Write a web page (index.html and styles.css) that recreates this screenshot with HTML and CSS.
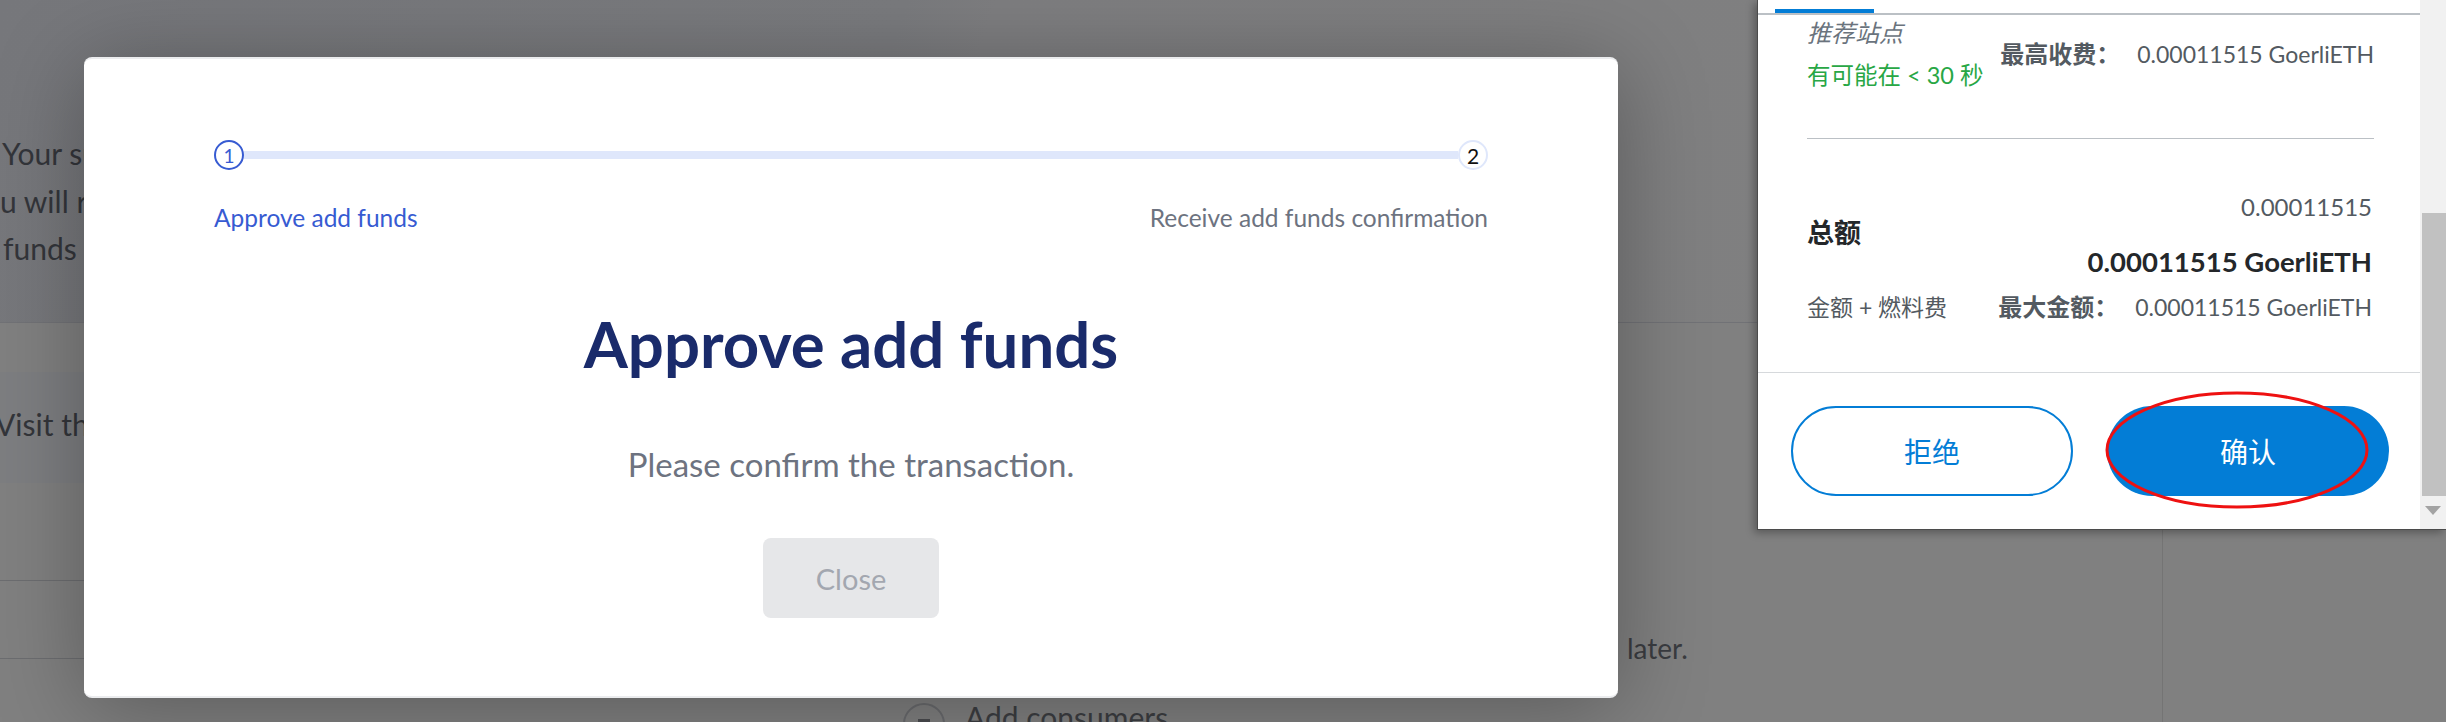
FILE: index.html
```html
<!DOCTYPE html>
<html lang="en">
<head>
<meta charset="utf-8">
<title>Approve add funds</title>
<link rel="stylesheet" href="styles.css">
</head>
<body>
<div class="bg">
  <main class="bg-main">
    <section class="bg-intro">
      <p class="l1">Your sub</p>
      <p class="l2">u will re</p>
      <p class="l3">funds an</p>
    </section>
    <section class="bg-visit">
      <p>Visit the</p>
    </section>
    <section class="bg-lower">
      <div class="bg-left">
        <div class="bg-row"></div>
        <div class="bg-row bg-row-last"></div>
        <div class="bg-add">
          <span class="add-icon"><span class="add-dash"></span></span>
          <span class="add-text">Add consumers</span>
        </div>
      </div>
      <div class="bg-right">
        <p>later.</p>
      </div>
    </section>
  </main>
  <aside class="bg-side"></aside>
</div>

<div class="modal">
  <div class="steps">
    <div class="track">
      <span class="dot dot-active">1</span>
      <span class="bar"></span>
      <span class="dot dot-next">2</span>
    </div>
    <div class="step-labels">
      <span class="lbl-active">Approve add funds</span>
      <span class="lbl-next">Receive add funds confirmation</span>
    </div>
  </div>
  <h1 class="title">Approve add funds</h1>
  <p class="subtitle">Please confirm the transaction.</p>
  <button class="close-btn" type="button">Close</button>
</div>

<div class="mm">
  <div class="mm-content">
    <div class="mm-tabs"><span class="tab-ind"></span></div>
    <div class="mm-fee">
      <div class="fee-left">
        <p class="site">推荐站点</p>
        <p class="eta">有可能在 &lt; 30 秒</p>
      </div>
      <div class="fee-right">
        <span class="key">最高收费：</span><span class="val">0.00011515 GoerliETH</span>
      </div>
    </div>
    <div class="mm-total">
      <div class="tot-head">总额</div>
      <div class="tot-vals">
        <p class="val">0.00011515</p>
        <p class="tot-big">0.00011515 GoerliETH</p>
      </div>
      <div class="tot-sub">金额 + 燃料费</div>
      <div class="tot-max">
        <span class="key">最大金额：</span><span class="val">0.00011515 GoerliETH</span>
      </div>
    </div>
    <div class="mm-actions">
      <button class="mm-btn mm-reject" type="button">拒绝</button>
      <button class="mm-btn mm-confirm" type="button">确认</button>
    </div>
  </div>
  <div class="mm-scroll">
    <span class="sb-space"></span>
    <span class="sb-thumb"></span>
    <span class="sb-down"></span>
  </div>
</div>

<svg class="mark" width="266" height="122" viewBox="0 0 266 122" aria-hidden="true">
  <ellipse cx="133" cy="60" rx="130" ry="57" fill="none" stroke="#ee1111" stroke-width="3"/>
</svg>
</body>
</html>
```

FILE: styles.css
```css
* { box-sizing: border-box; margin: 0; padding: 0; }
html, body { width: 2446px; height: 722px; overflow: hidden; }
body {
  position: relative;
  background: #808080;
  font-family: Lato, "Noto Sans CJK SC", sans-serif;
}

/* ---------- dimmed page behind ---------- */
.bg {
  display: grid;
  grid-template-columns: 2162px 1fr;
  height: 722px;
  overflow: hidden;
}
.bg-main { display: flex; flex-direction: column; }
.bg-side { border-left: 1px solid #747474; background: #808080; }

.bg-intro {
  height: 323px;
  padding-top: 130px;
  border-bottom: 1px solid #717276;
  font-size: 30px;
  line-height: 47.5px;
  color: #33353a;
  white-space: nowrap;
  background: linear-gradient(108deg, #76777b 0%, #7a7b7e 40%, #7e7e80 44%, #808080 100%);
}
.bg-intro .l1 { padding-left: 2px; }
.bg-intro .l3 { padding-left: 3px; }

.bg-visit {
  margin-top: 49px;
  width: 1610px;
  height: 111px;
  background: #7d7e81;
  font-size: 30px;
  line-height: 104px;
  color: #33353a;
  white-space: nowrap;
  text-indent: -5px;
}

.bg-lower {
  flex: 1;
  display: grid;
  grid-template-columns: 1610px 1fr;
}
.bg-left { display: flex; flex-direction: column; }
.bg-row {
  border-top: 1px solid #6c6d70;
  height: 78px;
  margin-top: 97px;
}
.bg-row-last { margin-top: 0; height: 0; }
.bg-add {
  display: flex;
  align-items: flex-start;
  gap: 20px;
  padding-left: 903px;
  margin-top: 44px;
  font-size: 30px;
  line-height: 36px;
  color: #3c3e42;
  white-space: nowrap;
}
.add-icon {
  flex: none;
  width: 42px;
  height: 42px;
  border: 2px solid #6a6b6e;
  border-radius: 50%;
  display: flex;
  justify-content: center;
  padding-top: 14px;
}
.add-dash { width: 12px; height: 8px; background: #4a4b4f; }
.add-text { margin-top: -4px; }
.bg-right p {
  padding: 145px 0 0 17px;
  font-size: 28px;
  line-height: 40px;
  color: #3a3c40;
}

/* ---------- modal ---------- */
.modal {
  position: absolute;
  left: 84px;
  top: 57px;
  width: 1534px;
  height: 641px;
  background: #fff;
  border-radius: 8px;
  border-top: 2px solid #ebecee;
  border-bottom: 2px solid #ebecee;
  box-shadow: 0 10px 90px rgba(0, 0, 0, 0.3);
  padding: 81px 130px 0;
  display: flex;
  flex-direction: column;
  align-items: center;
}
.steps { width: 100%; }
.track { display: flex; align-items: center; }
.dot {
  width: 30px;
  height: 30px;
  border-radius: 50%;
  display: flex;
  align-items: center;
  justify-content: center;
  font-size: 19px;
  flex: none;
}
.dot-active { border: 2px solid #375bd2; color: #375bd2; }
.dot-next { border: 2px solid #dfe7fb; color: #111; font-size: 21px; }
.bar { flex: 1; height: 8px; background: #dfe7fb; }
.step-labels {
  display: flex;
  justify-content: space-between;
  margin-top: 33px;
  font-size: 24.5px;
  line-height: 30px;
}
.lbl-active { color: #375bd2; }
.lbl-next { color: #6d7380; }

.title {
  margin-top: 72px;
  font-size: 63.5px;
  line-height: 77px;
  font-weight: 700;
  color: #1a2b6b;
}
.subtitle {
  margin-top: 63px;
  font-size: 33px;
  line-height: 39px;
  color: #6d7380;
}
.close-btn {
  margin-top: 54px;
  width: 176px;
  height: 80px;
  border: none;
  border-radius: 8px;
  background: #e6e7e9;
  color: #a3a7b0;
  font-family: inherit;
  font-size: 29px;
}

/* ---------- wallet popup ---------- */
.mm {
  position: absolute;
  left: 1757px;
  top: 0;
  width: 689px;
  height: 530px;
  background: #fff;
  border-left: 1px solid #4b4b4b;
  border-bottom: 1px solid #4b4b4b;
  box-shadow: -3px 3px 8px rgba(0, 0, 0, 0.3);
  display: flex;
}
.mm-content { flex: 1; display: flex; flex-direction: column; }
.mm-tabs {
  height: 15px;
  border-bottom: 2px solid #bbc0c5;
  padding: 9px 0 0 17px;
}
.tab-ind { display: block; width: 99px; height: 4px; background: #037dd6; }

.mm-fee {
  height: 124px;
  margin: 0 46px 0 49px;
  border-bottom: 1px solid #bbc0c5;
  display: flex;
  justify-content: space-between;
  font-size: 23px;
}
.fee-left p { line-height: 36px; }
.site { font-style: italic; color: #6a737d; font-size: 24px; }
.eta { margin-top: 6px; color: #28a745; font-size: 23.5px; }
.fee-right { padding-top: 21px; line-height: 36px; }
.key { font-weight: 700; color: #535a61; margin-right: 17px; font-size: 24px; }
.val { color: #535a61; }

.mm-total {
  height: 234px;
  border-bottom: 1px solid #d6d9dc;
  padding: 51px 48px 0 49px;
  display: grid;
  grid-template-columns: auto 1fr;
  align-content: start;
  font-size: 23px;
}
.tot-head {
  align-self: center;
  font-size: 27px;
  font-weight: 700;
  color: #24272a;
  margin-top: -6px;
}
.tot-vals { text-align: right; }
.tot-vals p { line-height: 34px; }
.tot-vals .val { font-size: 24px; }
.tot-big {
  margin-top: 21px;
  font-size: 27.5px;
  font-weight: 700;
  color: #24272a;
}
.tot-sub { margin-top: 11px; line-height: 34px; color: #535a61; }
.tot-max { margin-top: 11px; line-height: 34px; text-align: right; }

.mm-actions {
  display: flex;
  gap: 34px;
  padding: 33px 0 0 33px;
}
.mm-btn {
  width: 282px;
  height: 90px;
  border-radius: 45px;
  font-family: inherit;
  font-size: 28px;
}
.mm-reject { background: #fff; border: 2px solid #037dd6; color: #037dd6; }
.mm-confirm { background: #037dd6; border: none; color: #fff; }

.mm-scroll {
  width: 26px;
  background: #f1f1f1;
  display: flex;
  flex-direction: column;
  align-items: flex-end;
}
.sb-space { height: 213px; }
.sb-thumb { width: 24px; height: 283px; background: #c1c1c1; }
.sb-down {
  margin: 10px 5px 0 0;
  width: 0;
  height: 0;
  border-left: 8px solid transparent;
  border-right: 8px solid transparent;
  border-top: 9px solid #a3a3a3;
}

.mark {
  position: absolute;
  left: 2104px;
  top: 390px;
}
```
